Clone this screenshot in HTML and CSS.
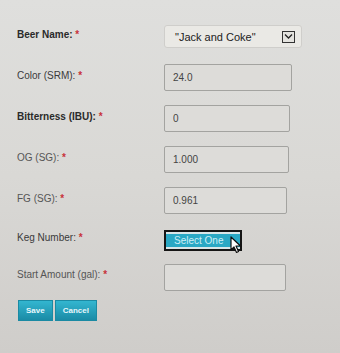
FILE: index.html
```html
<!DOCTYPE html>
<html lang="en">
<head>
  <meta charset="UTF-8">
  <title>Edit Beer</title>
  <link rel="stylesheet" href="styles.css">
</head>
<body>

<form class="beer-form">
  <div class="row">
    <label class="strong">Beer Name: <span class="req">*</span></label>
    <div class="select">
      <span>"Jack and Coke"</span>
      <span class="arrow">
        <svg width="9" height="7" viewBox="0 0 9 7"><path d="M1 1.5 L4.5 5 L8 1.5" fill="none" stroke="#222" stroke-width="1.3"/></svg>
      </span>
    </div>
  </div>

  <div class="row">
    <label>Color (SRM): <span class="req">*</span></label>
    <input class="field w128" type="text" value="24.0">
  </div>

  <div class="row">
    <label class="strong">Bitterness (IBU): <span class="req">*</span></label>
    <input class="field w126" type="text" value="0">
  </div>

  <div class="row">
    <label class="light">OG (SG): <span class="req">*</span></label>
    <input class="field w125" type="text" value="1.000">
  </div>

  <div class="row">
    <label class="light">FG (SG): <span class="req">*</span></label>
    <input class="field w123" type="text" value="0.961">
  </div>

  <div class="row short">
    <label>Keg Number: <span class="req">*</span></label>
    <div class="keg-select">
      <span class="keg-option">Select One</span>
      <svg class="cursor" width="13" height="18" viewBox="0 0 13 18">
        <path d="M1 1 L1 14 L4 11 L6.5 16.5 L8.5 15.5 L6 10 L10.5 10 Z" fill="#fff" stroke="#111" stroke-width="1.2" stroke-linejoin="round"/>
      </svg>
    </div>
  </div>

  <div class="row shorter">
    <label class="light">Start Amount (gal): <span class="req">*</span></label>
    <input class="field w122" type="text" value="">
  </div>

  <div class="actions">
    <button type="button" class="btn">Save</button>
    <button type="button" class="btn">Cancel</button>
  </div>
</form>

</body>
</html>
```

FILE: styles.css
```css
:root {
  --teal: #2aa8c4;
  --teal-dark: #1a8ba6;
  --label: #3a3a3a;
  --req: #c8323a;
}

body {
  margin: 0;
  height: 353px;
  font-family: "Liberation Sans", Arial, sans-serif;
  background: linear-gradient(180deg, #dfdfdd 0%, #d9d8d5 50%, #cfcdca 100%);
  overflow: hidden;
}

.beer-form {
  padding: 16px 0 0 17px;
}

.row {
  display: grid;
  grid-template-columns: 147px auto;
  align-items: center;
  height: 41px;
}

.row.short {
  height: 38px;
}

.row.shorter {
  height: 36px;
}

.row label {
  margin-top: -5px;
  font-size: 10px;
  color: var(--label);
}

.row label.strong {
  font-weight: bold;
  color: #2a2a2a;
}

.row label.light {
  color: #555;
}

.req {
  color: var(--req);
  font-weight: bold;
}

.select {
  width: 138px;
  height: 23px;
  box-sizing: border-box;
  display: flex;
  align-items: center;
  justify-content: space-between;
  padding: 0 6px 0 10px;
  background: #eae9e5;
  border: 1px solid #cfcecb;
  border-radius: 3px;
  font-size: 11px;
  color: #222;
}

.arrow {
  width: 13px;
  height: 12px;
  box-sizing: border-box;
  border: 1px solid #333;
  display: flex;
  align-items: center;
  justify-content: center;
  background: #e4e3df;
}

.field {
  height: 27px;
  box-sizing: border-box;
  padding: 0 8px;
  background: #dddcd9;
  border: 1px solid #a3a3a0;
  border-radius: 2px;
  font-family: inherit;
  font-size: 10px;
  color: #444;
}

.w128 { width: 128px; }
.w126 { width: 126px; }
.w125 { width: 125px; }
.w123 { width: 123px; }
.w122 { width: 122px; }

.keg-select {
  position: relative;
  width: 78px;
  height: 21px;
  box-sizing: border-box;
  border: 2px solid #151515;
  background: #d9e6e8;
  display: flex;
  align-items: center;
  padding: 2px 0;
}

.keg-option {
  display: block;
  width: 100%;
  height: 13px;
  line-height: 13px;
  background: var(--teal);
  color: #cdeef5;
  font-size: 10px;
  padding-left: 8px;
}

.cursor {
  position: absolute;
  left: 64px;
  top: 4px;
}

.actions {
  display: flex;
  gap: 2px;
  margin-top: 5px;
  margin-left: 1px;
}

.btn {
  height: 21px;
  padding: 0 7px;
  border: 1px solid #1b8aa3;
  background: linear-gradient(180deg, #33b6d0 0%, var(--teal-dark) 100%);
  color: #e8f7fb;
  font-family: inherit;
  font-weight: bold;
  font-size: 8px;
  cursor: pointer;
}
```
